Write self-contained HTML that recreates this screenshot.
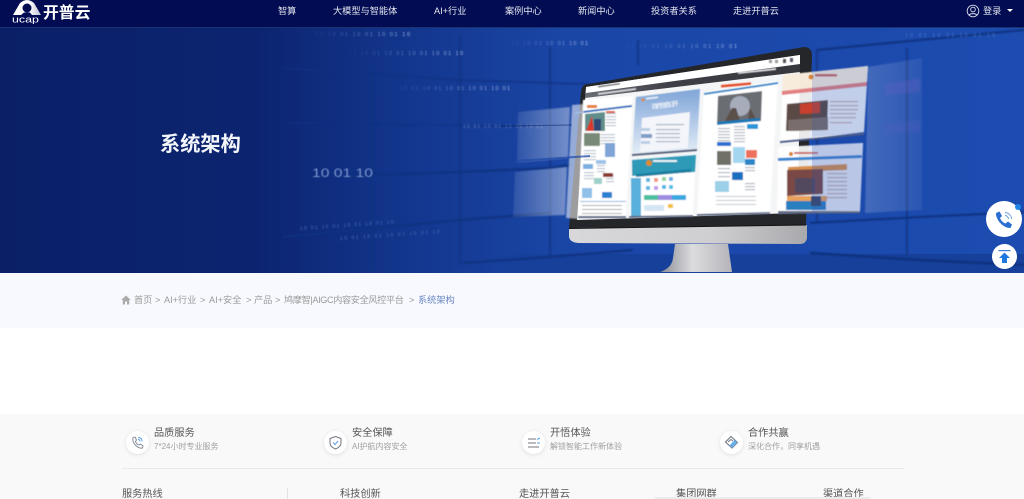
<!DOCTYPE html>
<html lang="zh">
<head>
<meta charset="utf-8">
<title>系统架构</title>
<style>
html,body{margin:0;padding:0;width:1024px;height:499px;overflow:hidden;background:#fff;font-family:"Liberation Sans","Noto Sans CJK SC",sans-serif}
#w{position:absolute;left:0;top:0;width:1024px;height:499px;overflow:hidden;filter:blur(.3px)}
.a{position:absolute;white-space:nowrap}
#hd{left:0;top:0;width:1024px;height:28px;background:#020c52;border-bottom:1px solid #1a3272;box-sizing:border-box}
.n{top:4px;font-size:9.2px;line-height:14px;color:#e4e7f0}
#ban{left:0;top:28px;width:1024px;height:245px;background:linear-gradient(90deg,#0a1f66 0,#0c2470 25%,#12348a 38%,#1a46a6 55%,#1c4cb0 100%)}
#crumb{left:0;top:273px;width:1024px;height:55px;background:#f7f9fe}
#ft{left:0;top:414px;width:1024px;height:85px;background:#f9f9f9}
.c{font-size:9.2px;line-height:14px;color:#9a9a9a;top:293px}
.t{font-size:10.2px;line-height:14px;color:#555;top:427px}
.s{font-size:8px;line-height:11px;color:#a0a0a0;top:441px}
.f{font-size:10.2px;line-height:14px;color:#555;top:488px}
.ic{width:23px;height:23px;border-radius:50%;background:#fff;box-shadow:0 1px 5px rgba(0,0,0,.1);top:431px}
</style>
</head>
<body>
<div id="w">
<div class="a" id="ban">
<svg width="1024" height="245" viewBox="0 28 1024 245" style="position:absolute;left:0;top:0">
<defs>
<filter id="b1"><feGaussianBlur stdDeviation=".45"/></filter>
<filter id="b2"><feGaussianBlur stdDeviation="1.2"/></filter>
<filter id="b3"><feGaussianBlur stdDeviation=".7"/></filter>
<linearGradient id="chin" x1="0" x2="1" y1="0" y2="0"><stop offset="0" stop-color="#d8d8da"/><stop offset=".6" stop-color="#cfcfd2"/><stop offset="1" stop-color="#a9a9ad"/></linearGradient>
<linearGradient id="st" x1="0" x2="1" y1="0" y2="0"><stop offset="0" stop-color="#8a8c93"/><stop offset=".45" stop-color="#dcdcdf"/><stop offset="1" stop-color="#b5b5b9"/></linearGradient>
<linearGradient id="gl" x1="0" x2="1" y1="0" y2="0"><stop offset="0" stop-color="#fff" stop-opacity=".1"/><stop offset="1" stop-color="#fff" stop-opacity=".4"/></linearGradient>
<linearGradient id="gr" x1="0" x2="1" y1="0" y2="0"><stop offset="0" stop-color="#fff" stop-opacity=".18"/><stop offset="1" stop-color="#fff" stop-opacity=".07"/></linearGradient>
<linearGradient id="blueP" x1="0" x2="0" y1="0" y2="1"><stop offset="0" stop-color="#7fa5d8"/><stop offset="1" stop-color="#e4edf7"/></linearGradient>
<linearGradient id="dig" x1="0" x2="1" y1="0" y2="0"><stop offset="0" stop-color="#7f9ad8" stop-opacity="0"/><stop offset="1" stop-color="#a8bde6"/></linearGradient>
<linearGradient id="dk" x1="0" x2="1" y1="0" y2="0"><stop offset="0" stop-color="#6a6c74"/><stop offset=".4" stop-color="#3e3f46"/><stop offset="1" stop-color="#37383e"/></linearGradient>
</defs>
<!-- wall grid -->
<rect x="500" y="254" width="524" height="19" fill="#17409b"/>
<g stroke="#10307f" fill="none" filter="url(#b3)">
<path stroke-width="2" d="M460 34V265M550 47V257M372 70V272M638 40V65M817 50V222M907 48V255" opacity=".75"/>
<path stroke-width="1.500" d="M283 68L460 80 550 83 590 84" opacity=".8"/>
<path stroke-width="1.500" d="M283 123L460 125 530 126" opacity=".7"/>
<path stroke-width="2" d="M313 177L460 172 550 168 570 165"/>
<path stroke-width="2" d="M283 237L460 220 550 213"/>
<path stroke-width="2" d="M463 263L550 257 633 250"/>
<path stroke-width="2" d="M817 50L920 40 1024 30"/>
<path stroke-width="2" d="M810 223L920 217 1024 212"/>
<path stroke-width="2.500" d="M810 253L920 260 1024 265"/>
<path stroke-width="1.200" d="M283 68V270" opacity=".25"/>
</g>
<!-- digits -->
<g font-family="Liberation Sans,sans-serif" filter="url(#b1)">
<text x="312" y="177" font-size="12" fill="#7e98d0" textLength="61" lengthAdjust="spacingAndGlyphs">10 01 10</text>
<text x="303" y="36" font-size="5.500" fill="url(#dig)" textLength="107">10 01 10 01 10 01 10 01 10</text>
<text x="337" y="55" font-size="5.500" fill="url(#dig)" textLength="126">10 01 10 01 10 01 10 01 10 01 10</text>
<text x="377" y="90" font-size="5.500" fill="url(#dig)" textLength="133">10 01 10 01 10 01 10 01 10 01 10 01</text>
<text x="500" y="45" font-size="5.500" fill="url(#dig)" textLength="88">10 01 10 01 10 01 10 01</text>
<text x="613" y="48" font-size="5.500" fill="url(#dig)" textLength="124">10 01 10 01 10 01 10 01 10 01</text>
<text x="463" y="128" font-size="5" fill="#7f98d0" textLength="80" opacity=".7">10 01 10 01 10 01 10 01</text>
<text x="300" y="230" font-size="5" fill="#4c6cb2" textLength="94" transform="rotate(-4 300 230)">10 01 10 01 10 01 10 01 10</text>
<text x="340" y="240" font-size="5" fill="#4c6cb2" textLength="100" transform="rotate(-4 340 240)">10 01 10 01 10 01 10 01 10</text>
<text x="905" y="37" font-size="5.500" fill="#4f74c4" textLength="90">10 01 10 01 10 01 10</text>
</g>
<!-- left glass panels -->
<polygon points="518,112 570,107 568,158 517,163" fill="url(#gl)" filter="url(#b3)"/>
<polygon points="515,172 567,167 565,215 513,217" fill="url(#gl)" filter="url(#b3)"/>
<!-- right far panel -->
<polygon points="868,67 922,58 922,210 865,213" fill="url(#gr)" filter="url(#b3)"/>
<polygon points="885,84 920,78 920,92 885,95" fill="#6a5fc0" opacity=".3" filter="url(#b2)"/>
<polygon points="885,124 920,120 920,132 885,134" fill="#6a5fc0" opacity=".18" filter="url(#b2)"/>
<!-- monitor -->
<path d="M675 244H728L732 272H660Q672 268 673 258Z" fill="url(#st)"/>
<path d="M569 228L807 225V238Q806 244 800 244L578 243Q569 242 569 236Z" fill="url(#chin)"/>
<path d="M588 84Q582 84 581 92L569 228 806 225 812 56Q812 47 804 47Z" fill="#25262a"/>
<path d="M569 228.500L806 225" stroke="#111" stroke-width="1"/>
<!-- screen -->
<polygon points="586,87 800,55 798,213 577,220" fill="#f4f5f6"/>
<polygon points="586,87 800,55 800,64 586,93" fill="#fff"/>
<polygon points="586,93 800,64 800,72 585,98" fill="url(#dk)"/>
<g filter="url(#b1)">
<polygon points="738,72 776,68 776,70 738,74" fill="#dfe0e4"/>
<polygon points="598,93 636,88 636,90 598,95" fill="#d5d6da"/>
<rect x="598" y="86" width="22" height="1.500" fill="#777" transform="rotate(-8 598 86)"/>
<rect x="769" y="60" width="3" height="3" fill="#999"/><rect x="775" y="60" width="3" height="3" fill="#999"/><rect x="783" y="59" width="3" height="4" fill="#555"/><rect x="790" y="58" width="3" height="4" fill="#556"/>
<!-- col 1 page -->
<polygon points="583,100 633,96 626,216 578,217" fill="#fff"/>
<polygon points="575,112 632,105 632,107 575,114" fill="#2a6fbf"/>
<rect x="587" y="105" width="10" height="3" fill="#e57d30"/>
<polygon points="585,114 605,112 605,131 585,131" fill="#5e8d8a"/>
<polygon points="586,131 592,116 594,131" fill="#d8382f"/>
<rect x="594" y="119" width="7" height="12" fill="#2f4a76"/>
<rect x="584" y="133" width="16" height="13" fill="#7a8a78"/>
<g fill="#bcc4d2"><rect x="606" y="113" width="10" height="1.200"/><rect x="606" y="116" width="10" height="1.200"/><rect x="606" y="119" width="10" height="1.200"/><rect x="606" y="122" width="10" height="1.200"/><rect x="606" y="125" width="10" height="1.200"/><rect x="601" y="134" width="14" height="1.200"/><rect x="601" y="137" width="14" height="1.200"/><rect x="601" y="140" width="14" height="1.200"/><rect x="601" y="143" width="14" height="1.200"/><rect x="584" y="150" width="12" height="1.200"/><rect x="584" y="153" width="12" height="1.200"/><rect x="584" y="156" width="12" height="1.200"/><rect x="584" y="159" width="12" height="1.200"/><rect x="584" y="172" width="10" height="1.200"/><rect x="584" y="175" width="10" height="1.200"/><rect x="584" y="178" width="10" height="1.200"/><rect x="597" y="165" width="8" height="1.200"/><rect x="597" y="168" width="8" height="1.200"/><rect x="597" y="171" width="8" height="1.200"/><rect x="606" y="175" width="8" height="1.200"/><rect x="606" y="178" width="8" height="1.200"/><rect x="606" y="181" width="8" height="1.200"/></g>
<rect x="606" y="111" width="9" height="2" fill="#e0552d"/>
<rect x="605" y="143" width="10" height="14" fill="#7fa4d8"/>
<rect x="583" y="164" width="10" height="5" fill="#7db0e0"/>
<rect x="596" y="160" width="10" height="4" fill="#9cc3e8"/>
<rect x="603" y="173" width="10" height="4" fill="#8a3a30"/>
<rect x="582" y="188" width="10" height="10" fill="#8fc0ea"/>
<rect x="602" y="192" width="10" height="6" fill="#2b7fd0"/>
<rect x="594" y="178" width="8" height="6" fill="#9cd0c8"/>
<rect x="580" y="201" width="46" height=".8" fill="#6d9bd4"/>
<g fill="#aaa"><rect x="582" y="205" width="40" height="1"/><rect x="582" y="209" width="40" height="1"/><rect x="582" y="213" width="40" height="1"/></g>
<polygon points="578,216 626,216 626,218 578,218" fill="#5e6a86"/>
<!-- col 2 upper -->
<polygon points="636,97 700,89 697,149 632,154" fill="url(#blueP)"/>
<circle cx="643" cy="100" r="1.500" fill="#e0862c"/>
<rect x="646" y="98" width="12" height="1.500" fill="#f2f4f8" transform="rotate(-7 646 98)"/>
<text x="652" y="109" font-size="6.500" fill="#fff" textLength="27" transform="rotate(-7 652 109)" font-family="Liberation Sans,Noto Sans CJK SC,sans-serif">政府信息公开</text>
<polygon points="642,118 690,112 688,148 640,152" fill="#f3f5fa"/>
<rect x="641" y="134" width="11" height="4" fill="#7f9fc8"/>
<rect x="641" y="128" width="9" height="3" fill="#bccde4"/>
<rect x="641" y="141" width="9" height="3" fill="#bccde4"/>
<g fill="#aab4c6"><rect x="656" y="124" width="28" height="1.200"/><rect x="656" y="129" width="24" height="1.200"/><rect x="656" y="133" width="24" height="1.200"/><rect x="656" y="137" width="24" height="1.200"/><rect x="656" y="141" width="24" height="1.200"/></g>
<polygon points="632,154 697,149 697,151 632,156" fill="#566079"/>
<!-- col 2 lower -->
<polygon points="632,160 696,155 693,215 629,217" fill="#fff"/>
<polygon points="632,160 696,155 695,172 632,176" fill="#2d9ab8"/>
<polygon points="636,174 691,169 691,172 636,177" fill="#1d7ea0"/>
<circle cx="649" cy="163" r="3" fill="#dc8a2c"/>
<rect x="653" y="160" width="24" height="2" fill="#e8f4f8"/>
<rect x="631" y="178" width="10" height="38" fill="#5ab0dc"/>
<rect x="646" y="178" width="4" height="4" fill="#5cb5e0" rx="1"/><rect x="654" y="178" width="4" height="4" fill="#ef9a84" rx="1"/><rect x="662" y="177" width="4" height="4" fill="#92d49a" rx="1"/><rect x="669" y="177" width="4" height="4" fill="#6fb0ea" rx="1"/><rect x="646" y="186" width="4" height="4" fill="#5cb5e0" rx="1"/><rect x="654" y="186" width="4" height="4" fill="#c09ae8" rx="1"/><rect x="662" y="185" width="4" height="4" fill="#4fb7e8" rx="1"/><rect x="669" y="185" width="4" height="4" fill="#4fc0e8" rx="1"/>
<rect x="644" y="195" width="14" height="5" fill="#4cc0a0"/><rect x="658" y="195" width="14" height="5" fill="#9d8de0"/><rect x="672" y="195" width="14" height="5" fill="#39a8e0"/>
<rect x="668" y="204" width="5" height="4" fill="#f0c040"/>
<rect x="644" y="205" width="20" height="6" fill="#b8d4ec" opacity=".6"/>
<polygon points="629,216 693,215 693,217 629,218" fill="#5e6a86"/>
<!-- col 3 -->
<polygon points="704,92 778,81 770,213 697,215" fill="#fff"/>
<polygon points="704,93 778,82 778,84 704,95" fill="#2a86c8"/>
<rect x="721" y="85" width="30" height="2.500" fill="#e6502c" transform="rotate(-5 721 85)"/>
<polygon points="718,96 762,91 761,121 717,124" fill="#6b6d72"/>
<ellipse cx="740" cy="106" rx="10" ry="10" fill="#a6acb9"/>
<path d="M725 121L732 108H736L740 121ZM748 120L750 108 756 119Z" fill="#5a4f4a"/>
<polygon points="717,122 760,118 760,121 717,125" fill="#1678b8"/>
<g fill="#b3b8c2"><rect x="718" y="128" width="12" height="1.200"/><rect x="718" y="131" width="12" height="1.200"/><rect x="718" y="134" width="12" height="1.200"/><rect x="718" y="137" width="12" height="1.200"/><rect x="718" y="140" width="12" height="1.200"/><rect x="734" y="126" width="11" height="1.200"/><rect x="734" y="129" width="11" height="1.200"/><rect x="734" y="132" width="11" height="1.200"/><rect x="734" y="135" width="11" height="1.200"/><rect x="734" y="138" width="11" height="1.200"/><rect x="734" y="141" width="11" height="1.200"/><rect x="718" y="168" width="12" height="1.200"/><rect x="718" y="172" width="12" height="1.200"/><rect x="718" y="176" width="12" height="1.200"/><rect x="734" y="176" width="9" height="1.200"/><rect x="734" y="179" width="9" height="1.200"/><rect x="745" y="167" width="10" height="1.200"/><rect x="745" y="170" width="10" height="1.200"/><rect x="745" y="183" width="10" height="1.200"/><rect x="745" y="186" width="10" height="1.200"/><rect x="745" y="189" width="10" height="1.200"/><rect x="716" y="196" width="40" height=".8"/><rect x="716" y="200" width="40" height=".8"/><rect x="716" y="204" width="40" height=".8"/></g>
<rect x="747" y="124" width="11" height="5" fill="#2a96d8"/>
<rect x="746" y="150" width="11" height="8" fill="#ec6f5c"/>
<rect x="733" y="147" width="12" height="16" fill="#a4d6f0"/>
<rect x="717" y="142" width="14" height="4" fill="#2a6fd0"/>
<rect x="717" y="151" width="14" height="14" fill="#6f7069"/>
<rect x="732" y="172" width="11" height="8" fill="#1d6fc0"/>
<rect x="745" y="159" width="10" height="6" fill="#2a86c8"/>
<rect x="715" y="181" width="14" height="11" fill="#9ccfe8"/>
<polygon points="697,214 770,212 770,214 697,216" fill="#5e6a86"/>
<!-- col 4 right pages -->
<polygon points="783,75 868,66 864,132 780,142" fill="#fff" opacity=".9"/>
<polygon points="783,75 868,66 867,82 782,91" fill="#f7e9d7" opacity=".85"/>
<polygon points="782,91 867,82 867,86 782,95" fill="#de6b6d" opacity=".85"/>
<circle cx="811" cy="77" r="2.500" fill="#d9822c"/>
<rect x="815" y="74" width="22" height="2.500" fill="#c44b4b" opacity=".85"/>
<polygon points="787,104 828,100 827,130 786,131" fill="#5a4a44"/>
<polygon points="800,104 820,102 820,113 800,114" fill="#c8402e"/>
<polygon points="788,120 828,117 828,130 788,131" fill="#7a6d6d"/>
<g fill="#c0a8a8"><rect x="830" y="101" width="28" height="1.200"/><rect x="830" y="105" width="28" height="1.200"/><rect x="830" y="109" width="28" height="1.200"/><rect x="830" y="113" width="26" height="1.200"/><rect x="830" y="117" width="26" height="1.200"/><rect x="830" y="122" width="22" height="1.200"/></g>
<polygon points="780,141 864,133 864,135 780,143" fill="#4a5a88"/>
<polygon points="778,147 863,143 860,211 777,213" fill="#fff" opacity=".9"/>
<polygon points="778,158 862,155 862,158 778,161" fill="#3a86d0"/>
<circle cx="791" cy="154" r="2" fill="#d9822c"/>
<rect x="794" y="152" width="24" height="2" fill="#c44b4b" opacity=".8"/>
<polygon points="788,167 847,164 847,170 788,172" fill="#d8904e"/>
<polygon points="787,170 823,169 823,194 787,196" fill="#7a4a44"/>
<rect x="795" y="178" width="20" height="15" fill="#394a70" opacity=".6"/>
<rect x="787" y="196" width="40" height="5" fill="#e8a05a"/>
<rect x="786" y="201" width="40" height="9" fill="#2a7fc0"/>
<rect x="811" y="196" width="10" height="10" fill="#3a4a68"/>
<g fill="#c0a8a8"><rect x="827" y="173" width="20" height="1.200"/><rect x="827" y="177" width="20" height="1.200"/><rect x="827" y="181" width="20" height="1.200"/><rect x="827" y="185" width="20" height="1.200"/><rect x="827" y="189" width="20" height="1.200"/><rect x="827" y="193" width="20" height="1.200"/><rect x="827" y="197" width="20" height="1.200"/></g>
<polygon points="778,211 860,211 860,213 778,214" fill="#5e6a86"/>
</g>
<!-- blue tint on page parts off the monitor -->
<polygon points="812,69 868,66 864,132 812,137" fill="#2a55b5" opacity=".2"/>
<polygon points="812,145 863,143 860,211 812,212" fill="#2a55b5" opacity=".25"/>
<!-- bright glass over screen left edge -->
<polygon points="572,105 584,104 578,219 566,218" fill="#fff" opacity=".55" filter="url(#b3)"/>
<path d="M500 126L572 125" stroke="#0d2a70" stroke-width="1" opacity=".6"/>
<path d="M515 161L590 156" stroke="#1e4aa8" stroke-width="2" opacity=".7"/>
<text x="160" y="151" font-size="20.200" font-weight="700" fill="#f3f6fb" font-family="Liberation Sans,Noto Sans CJK SC,sans-serif">系统架构</text>
</svg>
</div>

<div class="a" id="hd"></div>
<svg class="a" style="left:10px;top:0" width="34" height="24" viewBox="0 0 34 24">
<defs><linearGradient id="lg" x1="0" x2="1" y1="0" y2="0"><stop offset="0" stop-color="#fff"/><stop offset=".6" stop-color="#fff"/><stop offset="1" stop-color="#b9bcd0"/></linearGradient></defs>
<path fill="url(#lg)" fill-rule="evenodd" d="M3 15L10 3Q17 -3 24 3L31 15H22L20 12.500H14L11 15ZM17 3.500A4.500 4.500 0 1 0 17 12.500A4.500 4.500 0 1 0 17 3.500Z"/>
<text x="2" y="22.500" font-size="9" fill="#fff" textLength="27" lengthAdjust="spacingAndGlyphs" font-family="Liberation Sans,sans-serif">ucap</text>
</svg>
<div class="a" style="left:43px;top:2px;font-size:15.800px;line-height:24px;color:#fff;font-weight:700">开普云</div>
<div class="a n" style="left:278px">智算</div>
<div class="a n" style="left:333px">大模型与智能体</div>
<div class="a n" style="left:434px">AI+行业</div>
<div class="a n" style="left:505px">案例中心</div>
<div class="a n" style="left:578px">新闻中心</div>
<div class="a n" style="left:651px">投资者关系</div>
<div class="a n" style="left:733px">走进开普云</div>
<svg class="a" style="left:966px;top:4px" width="14" height="14" viewBox="0 0 14 14" fill="none" stroke="#dfe3ee" stroke-width=".9"><circle cx="7" cy="7" r="5.800"/><circle cx="7" cy="5.500" r="2.300"/><path d="M3 11.500C4 9 10 9 11 11.500"/></svg>
<div class="a n" style="left:983px">登录</div>
<div class="a" style="left:1007px;top:9px;width:0;height:0;border-left:3px solid transparent;border-right:3px solid transparent;border-top:3px solid #fff"></div>

<div class="a" id="crumb"></div>
<svg class="a" style="left:121px;top:295px" width="10" height="10" viewBox="0 0 10 10"><path d="M5 .5L.3 5H1.800V9.500H4V6.500H6V9.500H8.200V5H9.700Z" fill="#aaa"/></svg>
<div class="a c" style="left:134px">首页</div>
<div class="a c" style="left:155px">&gt;</div>
<div class="a c" style="left:164px">AI+行业</div>
<div class="a c" style="left:200px">&gt;</div>
<div class="a c" style="left:209px">AI+安全</div>
<div class="a c" style="left:246px">&gt;</div>
<div class="a c" style="left:254px">产品</div>
<div class="a c" style="left:275px">&gt;</div>
<div class="a c" style="left:284px;letter-spacing:-.4px">鸠摩智|AIGC内容安全风控平台</div>
<div class="a c" style="left:409px">&gt;</div>
<div class="a c" style="left:418px;color:#6b88c4">系统架构</div>

<div class="a" id="ft"></div>
<div class="a ic" style="left:126px"></div>
<svg class="a" style="left:130px;top:435px" width="15" height="15" viewBox="0 0 15 15" fill="none"><path d="M3 2.500L5 2 6.500 5 5.500 6.500C6 8 7.500 9.500 9 10L10.500 9 13 11 12.500 13C8 14 1.500 8 3 2.500Z" stroke="#7a8290" stroke-width=".9"/><path d="M8 2.500C10.500 2.500 12 4 12 6.500M8 4.500C9.300 4.500 10 5.300 10 6.500" stroke="#5aa0ea" stroke-width=".9"/></svg>
<div class="a t" style="left:154px">品质服务</div>
<div class="a s" style="left:154px">7*24小时专业服务</div>
<div class="a ic" style="left:324px"></div>
<svg class="a" style="left:328px;top:435px" width="15" height="15" viewBox="0 0 15 15" fill="none"><path d="M7.500 1.500L13 3.500V8C13 11 10 13 7.500 14C5 13 2 11 2 8V3.500Z" stroke="#70757e" stroke-width="1"/><path d="M5 7.500L7 9.500 10 6" stroke="#5aa0ea" stroke-width="1"/></svg>
<div class="a t" style="left:352px">安全保障</div>
<div class="a s" style="left:352px">AI护航内容安全</div>
<div class="a ic" style="left:522px"></div>
<svg class="a" style="left:527px;top:436px" width="14" height="14" viewBox="0 0 14 14" fill="none" stroke="#70757e" stroke-width="1"><path d="M1 3H9M1 7H9M1 11H12"/><path d="M10 3.500L13 2M10 7H13" stroke="#5aa0ea"/></svg>
<div class="a t" style="left:550px">开悟体验</div>
<div class="a s" style="left:550px">解锁智能工作新体验</div>
<div class="a ic" style="left:720px"></div>
<svg class="a" style="left:724px;top:435px" width="15" height="15" viewBox="0 0 15 15" fill="none"><path d="M1.500 7L7 1.500 13.500 7.500 8 13Z" stroke="#70757e" stroke-width="1.100"/><path d="M8 13L13.500 7.500 10.500 5 5.500 10.500Z" fill="#6aaee8"/><path d="M4 7L7 4.500 9 6" stroke="#70757e"/></svg>
<div class="a t" style="left:748px">合作共赢</div>
<div class="a s" style="left:748px">深化合作，同享机遇</div>
<div class="a" style="left:122px;top:468px;width:782px;height:1px;background:#e9e9e9"></div>
<div class="a" style="left:287px;top:488px;width:1px;height:11px;background:#e4e4e4"></div>
<div class="a f" style="left:122px">服务热线</div>
<div class="a f" style="left:340px">科技创新</div>
<div class="a f" style="left:519px">走进开普云</div>
<div class="a f" style="left:676px">集团网群</div>
<div class="a f" style="left:823px">渠道合作</div>
<div class="a" style="left:655px;top:497px;width:215px;height:2px;background:#ececec"></div>

<div class="a" style="left:986px;top:201px;width:36px;height:36px;border-radius:50%;background:#fff"></div>
<svg class="a" style="left:994px;top:209px" width="22" height="22" viewBox="0 0 22 22" fill="none"><path d="M2 4L5.500 2.500 8 7 6 9C7 11.500 9 13.500 11.500 14.500L14 12.500 18 15.500 16.500 19C10 19.500 1.500 11 2 4Z" fill="#2b6ed2"/><path d="M11 3.500C14.500 3.500 17.500 6.500 17.500 10M11 6.500C13 6.500 14.500 8 14.500 10" stroke="#6ea4e4" stroke-width="1"/></svg>
<div class="a" style="left:1015px;top:204px;width:6px;height:6px;border-radius:50%;background:#1f86e8"></div>
<div class="a" style="left:992px;top:244px;width:25px;height:25px;border-radius:50%;background:#fff"></div>
<svg class="a" style="left:997px;top:249px" width="15" height="15" viewBox="0 0 15 15"><rect x="1.500" y="1" width="12" height="1.200" fill="#3a7fdc"/><path d="M7.500 3.500L13 9H10V14H5V9H2Z" fill="#1f78e0"/></svg>
</div>
</body>
</html>
